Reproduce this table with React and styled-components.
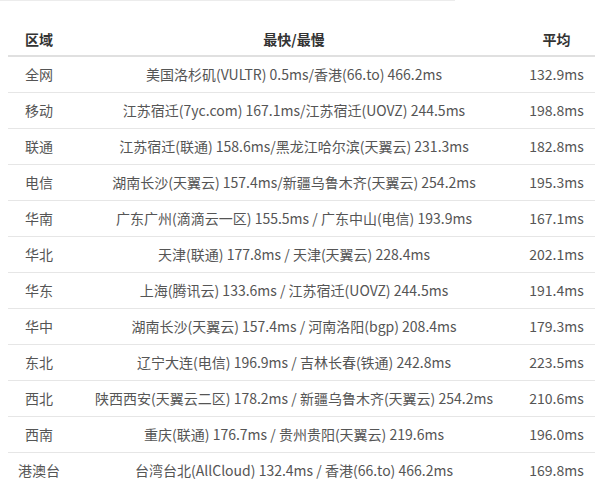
import React from "react";
import styled, { createGlobalStyle } from "styled-components";

const Global = createGlobalStyle`
  html, body { margin: 0; padding: 0; background: #fff; }
  body { font-family: "Noto Sans CJK SC", "Noto Sans", sans-serif; }
`;

const Page = styled.div`
  width: 600px;
  display: flex;
  flex-direction: column;
`;

const TopRule = styled.div`
  width: 455px;
  height: 1px;
  background: #ececec;
`;

const Table = styled.table`
  margin: 21px 0 0 8px;
  width: 587px;
  border-collapse: collapse;
  font-size: 14px;
  color: #555;
`;

const Col = styled.col`
  width: ${(p) => p.$w}px;
`;

const Th = styled.th`
  height: 33px;
  padding: 0;
  font-weight: 700;
  color: #333;
  text-align: center;
  border-bottom: 2px solid #e0e0e0;
  vertical-align: middle;
`;

const Tr = styled.tr`
  height: 36px;
`;

const Td = styled.td`
  padding: 0;
  line-height: 20px;
  text-align: center;
  border-bottom: 1px solid #e6e6e6;
  vertical-align: middle;
  white-space: nowrap;
`;

const rows = [
  ["全网", "美国洛杉矶(VULTR) 0.5ms/香港(66.to) 466.2ms", "132.9ms"],
  ["移动", "江苏宿迁(7yc.com) 167.1ms/江苏宿迁(UOVZ) 244.5ms", "198.8ms"],
  ["联通", "江苏宿迁(联通) 158.6ms/黑龙江哈尔滨(天翼云) 231.3ms", "182.8ms"],
  ["电信", "湖南长沙(天翼云) 157.4ms/新疆乌鲁木齐(天翼云) 254.2ms", "195.3ms"],
  ["华南", "广东广州(滴滴云一区) 155.5ms / 广东中山(电信) 193.9ms", "167.1ms"],
  ["华北", "天津(联通) 177.8ms / 天津(天翼云) 228.4ms", "202.1ms"],
  ["华东", "上海(腾讯云) 133.6ms / 江苏宿迁(UOVZ) 244.5ms", "191.4ms"],
  ["华中", "湖南长沙(天翼云) 157.4ms / 河南洛阳(bgp) 208.4ms", "179.3ms"],
  ["东北", "辽宁大连(电信) 196.9ms / 吉林长春(铁通) 242.8ms", "223.5ms"],
  ["西北", "陕西西安(天翼云二区) 178.2ms / 新疆乌鲁木齐(天翼云) 254.2ms", "210.6ms"],
  ["西南", "重庆(联通) 176.7ms / 贵州贵阳(天翼云) 219.6ms", "196.0ms"],
  ["港澳台", "台湾台北(AllCloud) 132.4ms / 香港(66.to) 466.2ms", "169.8ms"],
];

export default function App() {
  return (
    <Page>
      <Global />
      <TopRule />
      <Table>
        <colgroup>
          <Col $w={62} />
          <Col $w={448} />
          <Col $w={77} />
        </colgroup>
        <thead>
          <tr>
            <Th>区域</Th>
            <Th>最快/最慢</Th>
            <Th>平均</Th>
          </tr>
        </thead>
        <tbody>
          {rows.map((r) => (
            <Tr key={r[0]}>
              <Td>{r[0]}</Td>
              <Td>{r[1]}</Td>
              <Td>{r[2]}</Td>
            </Tr>
          ))}
        </tbody>
      </Table>
    </Page>
  );
}
